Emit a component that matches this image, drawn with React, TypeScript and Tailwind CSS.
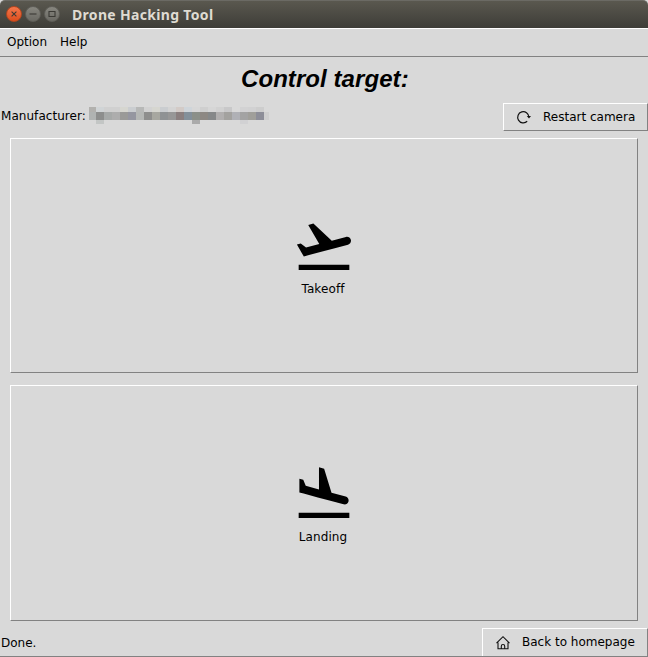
import React from "react";

const top = ["#b2b1ae","#d0d4d6","#d0d0d0","#d0d0d0","#d6d6d0","#cacdd0","#b7b8b7","#d2d2d2","#d6d6d0","#cacdd0","#d4d4d4","#d3cbc7","#cfd5da","#d7d7d7","#cfcfcf","#d6d6d6","#d1d1d1","#c8c8c9","#d9d9d9","#d2d2d3","#d1d1d2","#cdcdcd"];
const mid = ["#b0b3b2","#8d8e8d","#a6a9a8","#adadad","#9a9a98","#9596a0","#b5b7b5","#8e8e8d","#a7a7a0","#8f9294","#979797","#8a7f7f","#83909a","#8b9089","#8d8883","#868889","#b1afaf","#a3a29f","#b0b1b6","#a3a3a3","#a09f9a","#8d8e98","#cfcfcf"];

const BTN = "border-l border-t border-l-white border-t-white border-r border-b border-r-[#828282] border-b-[#828282]";

function Cells({ colors }: { colors: string[] }) {
  return (
    <>
      {colors.map((c, i) => (
        <span key={i} className="w-2 shrink-0 first:w-[7px]" style={{ backgroundColor: c }} />
      ))}
    </>
  );
}

function WindowButton({ close, children }: { close?: boolean; children: React.ReactNode }) {
  return (
    <span className={`flex size-4 items-center justify-center rounded-full border ${close ? "border-[#b3461f] bg-linear-to-b from-[#f4764a] to-[#dd4d1b]" : "border-[#5f5e58] bg-linear-to-b from-[#87867f] to-[#6a6963]"}`}>
      <svg width="14" height="14" viewBox="0 0 14 14" fill="none" stroke="#3b3a35" strokeWidth="1.1">{children}</svg>
    </span>
  );
}

export default function App() {
  return (
    <div className="bg-white">
    <div className="flex h-[657px] w-[648px] flex-col overflow-hidden bg-[#d9d9d9] font-['DejaVu_Sans','Noto_Sans',sans-serif] text-[12px] text-black">
      <header className="flex h-7 shrink-0 items-center gap-[3px] rounded-t-[5px] border-t border-[#6b6a64] bg-linear-to-b from-[#5a584f] to-[#3e3d38] pl-[6px] pb-px">
        <WindowButton close><path d="M4.6 4.6l4.8 4.8M9.4 4.6L4.6 9.4" /></WindowButton>
        <WindowButton><path d="M3.5 7h7" /></WindowButton>
        <WindowButton><path d="M4 4.5h6v5H4z" /></WindowButton>
        <span className="ml-[9px] whitespace-nowrap font-['Noto_Sans',sans-serif] text-[14px] font-bold tracking-[0.32px] text-[#dfdbd2]">Drone Hacking Tool</span>
      </header>
      <nav className="flex h-[29px] shrink-0 items-center gap-[13px] border-t border-b border-t-white border-b-[#828282] pb-0.5 pl-[7px]">
        <span>Option</span>
        <span>Help</span>
      </nav>
      <h1 className="h-[46px] shrink-0 pl-[241px] text-left font-['Liberation_Sans',sans-serif] text-[24px] leading-[43px] font-bold tracking-[0.07px] italic">Control target:</h1>
      <div className="flex h-7 shrink-0 items-center">
        <span className="w-[89px] pb-0.5 pl-px tracking-[0.05px] whitespace-nowrap">Manufacturer:</span>
        <div className="-mt-[3px] flex w-[180px] flex-col overflow-hidden">
          <div className="flex h-[5px]"><Cells colors={top} /></div>
          <div className="flex h-2"><Cells colors={mid} /></div>
          <div className="flex h-1"><span className="ml-[7px] w-2 bg-[#c3c6c5]" /><span className="ml-[88px] w-2 bg-[#aaaaaa]" /><span className="ml-10 w-2 bg-[#d1d1d3]" /></div>
        </div>
        <button className={`ml-auto flex h-7 w-[145px] items-center pl-3 ${BTN}`}>
          <svg className="mr-[11px] size-4" viewBox="0 0 16 16" fill="none" stroke="#111" strokeWidth="1.2"><path d="M11.2 12.3A5.6 5.6 0 1 1 12.9 8" /><path d="M10.8 7h4.2l-2 2.6z" fill="#111" stroke="none" /></svg>
          <span className="whitespace-nowrap">Restart camera</span>
        </button>
      </div>
      <button className={`mx-[10px] mt-[7px] flex h-[235px] shrink-0 flex-col items-center ${BTN}`}>
        <svg className="mt-[75px] size-16" viewBox="0 0 24 24"><path d="M2.5 19h19v2h-19v-2zm19.57-9.36c-.21-.8-1.04-1.28-1.84-1.06L14.92 10l-6.9-6.43-1.93.51 4.14 7.17-4.97 1.33-1.97-1.54-1.45.39 1.82 3.16.77 1.33 1.6-.43 5.31-1.42 4.35-1.16L21 11.49c.81-.23 1.28-1.05 1.07-1.85z" /></svg>
        <span className="mt-0.5 pr-0.5 tracking-[0.1px]">Takeoff</span>
      </button>
      <button className={`mx-[10px] mt-3 flex h-[236px] shrink-0 flex-col items-center ${BTN}`}>
        <svg className="mt-[76px] size-16" viewBox="0 0 24 24"><path d="M2.5 19h19v2h-19v-2zm7.18-5.73l4.35 1.16 5.31 1.42c.8.21 1.62-.26 1.84-1.06.21-.8-.26-1.62-1.06-1.84l-5.31-1.42-2.76-9.02L10.12 2v8.28L5.15 8.95l-.93-2.32-1.45-.39v5.17l1.6.43 5.31 1.43z" /></svg>
        <span className="mt-0.5 pr-0.5 tracking-[0.1px]">Landing</span>
      </button>
      <footer className="mt-[7px] flex h-[29px] shrink-0 items-center border-b border-[#828282]">
        <span className="pt-0.5 pl-px">Done.</span>
        <button className="ml-auto flex h-7 w-[166px] items-center border-t border-r border-l border-t-white border-r-[#828282] border-l-white pl-3">
          <svg className="mr-[11px] size-4" viewBox="0 0 16 16" fill="none" stroke="#111" strokeWidth="1.1"><path d="M1.5 8.2L8 1.7l6.5 6.5M3 7.6v6.2h10V7.6M6.3 13.8v-2.6a1.7 1.7 0 0 1 3.4 0v2.6" /></svg>
          <span className="pb-0.5 whitespace-nowrap">Back to homepage</span>
        </button>
      </footer>
    </div>
    </div>
  );
}
